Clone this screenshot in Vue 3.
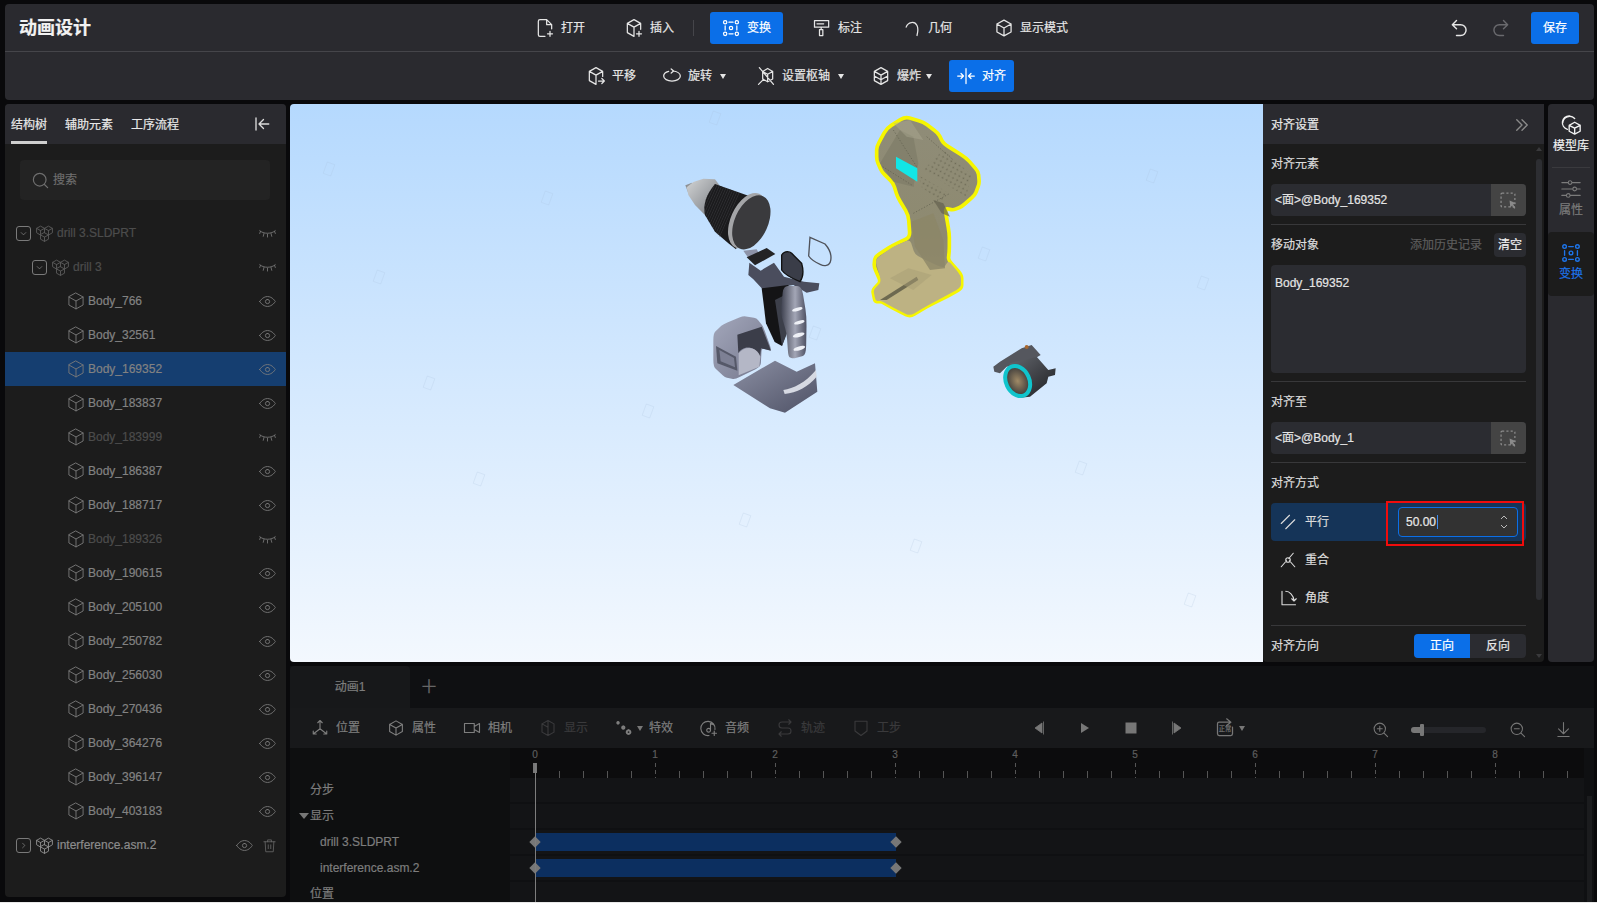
<script setup>
import { h } from 'vue'

const dots = (pts) => pts.map(([x, y]) => `M${x - 2} ${y}a2 2 0 1 0 4 0a2 2 0 1 0-4 0`).join(' ')
const icons = {
  open: 'M14 2H6a2 2 0 0 0-2 2v16a2 2 0 0 0 2 2h6 M14 2l6 6v5 M14 2v6h6 M18 16v6 M15 19h6',
  insert: 'M12 2 20 6.5v7 M12 2 4 6.5v11L12 22 M4 6.5l8 4.5 8-4.5 M12 11v11 M18 16v6 M15 19h6',
  transform: dots([[5, 5], [19, 5], [5, 19], [19, 19], [12, 12]]) + ' M9.5 5h5 M9.5 19h5 M5 9.5v5 M19 9.5v5',
  mark: 'M3 3h17v8H3z M6 7h8 M11 11v3H9v7h4v-7h-2',
  arc: 'M5 11C7 5 15 3 18 9c1.5 3 1 8 0 12',
  cube: 'M12 2.5 20.5 7.2v9.6L12 21.5l-8.5-4.7V7.2z M3.5 7.2 12 12l8.5-4.8 M12 12v9.5',
  undo: 'M9 3 4 8l5 5 M4 8h10a6.5 6.5 0 0 1 0 13H9',
  redo: 'M15 3l5 5-5 5 M20 8H10a6.5 6.5 0 0 0 0 13h5',
  move: 'M12 2 20 6.5v6 M12 2 4 6.5v11L12 22 M4 6.5l8 4.5 8-4.5 M12 11v11 M15 18h7 M19 15l3 3-3 3',
  rotate: 'M8 6.5C4 7.5 2 9.5 2 12c0 3.5 4.5 6 10 6s10-2.5 10-6c0-3-4-5.5-9-6 M11 3.5 14 6l-3 2.5',
  pivot: 'M14 3l6 3.5v9L14 19l-6-3.5v-9z M8 6.5l6 3.5 6-3.5 M14 10v9 M4 2l17 20 M3 22l6-6',
  explode: 'M12 2 20 6.5v11L12 22 4 17.5v-11z M4 6.5l8 4.5 8-4.5 M12 11v11 M4 12l8 4.5 8-4.5',
  align: 'M12 3v18 M2 12h6 M6 9l3 3-3 3 M22 12h-6 M18 9l-3 3 3 3',
  collapse: 'M4 4v16 M21 12H8 M14 6l-6 6 6 6',
  search: 'M11 3a8 8 0 1 0 0 16a8 8 0 1 0 0-16 M17 17l4 4',
  dbl: 'M5 5l7 7-7 7 M12 5l7 7-7 7',
  eye: 'M1 12s4-7 11-7 11 7 11 7-4 7-11 7-11-7-11-7z M12 9a3 3 0 1 0 0 6a3 3 0 1 0 0-6',
  shut: 'M1 8c5 5 17 5 22 0 M2 9l-1 3 M7 12l-1 4 M12 13v4 M17 12l1 4 M22 9l1 3',
  group: 'M12 11l5 2.8v5.4L12 22l-5-2.8v-5.4z M7 13.8l5 2.8 5-2.8 M12 16.6V22 M7 14 2 11V5.5L7 2.7l5 2.8 5-2.8 5 2.8V11l-5 3 M2 5.5l5 2.8 5-2.8 5 2.8 5-2.8 M12 5.5V11 M7 8.3V14 M17 8.3V14',
  down: 'M7 10l5 5 5-5',
  right: 'M10 7l5 5-5 5',
  trash: 'M3 6h18 M9 6V3h6v3 M5 6l1 16h12l1-16 M10 11v6 M14 11v6',
  model: 'M10 2a7.5 7.5 0 0 0-2 14.7 M16 9l6 3.3v6.5L16 22l-6-3.2v-6.5z M10 12.3l6 3.2 6-3.2 M16 15.5V22 M3 9.5A7.5 7.5 0 0 1 16 5',
  attrs: 'M2 5h7 M13 5h9 M2 12h12 M18 12h4 M2 19h5 M11 19h11 M11 3a2 2 0 1 0 0 4a2 2 0 1 0 0-4 M16 10a2 2 0 1 0 0 4a2 2 0 1 0 0-4 M9 17a2 2 0 1 0 0 4a2 2 0 1 0 0-4',
  parallel: 'M3 14 14 3 M9 21 21 9',
  coincide: 'M3 21l7-8 M21 21l-7-8 M19 3l-6 7 M12 9a3 3 0 1 0 0 6a3 3 0 1 0 0-6',
  angle: 'M4 3v18h18 M9 3c5 0 10 5 11 12 M17 13l3 3 3-3',
  axes: 'M12 2v11 M9 5l3-3 3 3 M12 13 3 20 M3 16v4h4 M12 13l9 7 M17 20h4v-4',
  cam: 'M2 6h13v12H2z M15 10l7-4v12l-7-4',
  halfcube: 'M12 2 20 6.5v11L12 22 4 17.5v-11z M12 2v20 M4 6.5l8 4.5',
  effect: 'M4 4a1 1 0 1 0 .1 0 M11 10a1.5 1.5 0 1 0 .1 0 M18 15a2.5 2.5 0 1 0 .1 0',
  audio: 'M20 14a9.5 9.5 0 1 0-8 8 M14 6v9 M14 6l4 1.5 M14 15a2.5 2.5 0 1 1-5 0a2.5 2.5 0 1 1 5 0 M19 16v6 M16 19h6',
  track: 'M20 4H8a4 4 0 0 0 0 8h8a4 4 0 0 1 0 8H4 M17 1l3 3-3 3 M7 17l-3 3 3 3',
  step: 'M4 3h16v13l-8 6-8-6z',
  zin: 'M11 3a8 8 0 1 0 0 16a8 8 0 1 0 0-16 M17 17l5 5 M7.5 11h7 M11 7.5v7',
  zout: 'M11 3a8 8 0 1 0 0 16a8 8 0 1 0 0-16 M17 17l5 5 M7.5 11h7',
  dl: 'M12 2v15 M5 11l7 7 7-7 M4 22h16',
  loop: 'M19 5H5a2 2 0 0 0-2 2v12a2 2 0 0 0 2 2h14a2 2 0 0 0 2-2v-8 M14 1l5 4-5 4'
}

const Ico = (p) =>
  h('svg', {
    viewBox: '0 0 24 24',
    fill: 'none',
    stroke: 'currentColor',
    'stroke-width': p.w || 1.5,
    'stroke-linecap': 'round',
    'stroke-linejoin': 'round',
    class: 'ico'
  }, [h('path', { d: icons[p.n] })])
Ico.props = ['n', 'w']

// closes a polygon with slightly rounded corners, so a model's outline stays organic
const rounded = (pts, r = 0.25) => {
  const n = pts.length
  const lerp = (a, b, t) => [a[0] + (b[0] - a[0]) * t, a[1] + (b[1] - a[1]) * t]
  let d = ''
  pts.forEach((p, i) => {
    const a = lerp(p, pts[(i - 1 + n) % n], r)
    const b = lerp(p, pts[(i + 1) % n], r)
    d += `${i ? 'L' : 'M'}${a.join(' ')}Q${p.join(' ')} ${b.join(' ')}`
  })
  return d + 'Z'
}
const housing = rounded([[735,50],[790,66],[835,100],[850,130],[920,175],[955,215],[958,250],[945,285],[905,320],[880,330],[855,325],[868,400],[868,450],[865,480],[905,525],[905,565],[860,590],[800,620],[750,650],[700,625],[665,605],[645,605],[638,570],[662,545],[642,500],[645,470],[700,435],[750,412],[745,345],[712,290],[700,250],[665,215],[650,180],[650,140],[680,85]])
const housingBase = rounded([[645,478],[700,440],[750,418],[765,465],[850,505],[866,482],[903,527],[903,563],[800,618],[750,648],[700,623],[665,603],[647,603],[640,570],[664,545]])
const gripPath = rounded([[370,558],[425,558],[440,650],[438,765],[400,776],[385,770],[380,700],[362,640]])
const coverPath = rounded([[160,700],[190,672],[250,648],[290,655],[310,680],[335,752],[305,745],[302,800],[225,838],[195,832],[160,800]], 0.2)

const bodies = [
  ['Body_766', 1], ['Body_32561', 1], ['Body_169352', 1], ['Body_183837', 1], ['Body_183999', 0],
  ['Body_186387', 1], ['Body_188717', 1], ['Body_189326', 0], ['Body_190615', 1], ['Body_205100', 1],
  ['Body_250782', 1], ['Body_256030', 1], ['Body_270436', 1], ['Body_364276', 1], ['Body_396147', 1], ['Body_403183', 1]
]
const ticks = Array.from({ length: 44 }, (_, i) => i)
const seconds = [0, 1, 2, 3, 4, 5, 6, 7, 8]
const marks = [[715,118],[329,169],[547,198],[379,277],[429,383],[648,411],[815,333],[984,254],[1152,176],[1203,283],[1081,468],[916,546],[479,479],[745,520],[1190,600]]
const tools = [
  { n: 'axes', t: '位置', c: 'mp' }, { n: 'cube', t: '属性', c: 'mq' }, { n: 'cam', t: '相机', c: 'mq' },
  { n: 'halfcube', t: '显示', c: 'mq off' }, { n: 'effect', t: '特效', c: 'mq', caret: true, w: 2.6 },
  { n: 'audio', t: '音频', c: 'mq' }, { n: 'track', t: '轨迹', c: 'mq off' }, { n: 'step', t: '工步', c: 'mq off' }
]
</script>

<template>
  <div class="app">
    <header class="top">
      <div class="bar1">
        <div class="title">动画设计</div>
        <div class="bar1-tools">
          <button class="tb"><Ico n="open" />打开</button>
          <button class="tb"><Ico n="insert" />插入</button>
          <i class="vsep"></i>
          <button class="tb on"><Ico n="transform" />变换</button>
          <button class="tb n2"><Ico n="mark" />标注</button>
          <button class="tb n1"><Ico n="arc" />几何</button>
          <button class="tb n3"><Ico n="cube" />显示模式</button>
        </div>
        <div class="bar1-right">
          <span class="act"><Ico n="undo" w="1.7" /></span>
          <span class="act dim"><Ico n="redo" w="1.7" /></span>
          <button class="save">保存</button>
        </div>
      </div>
      <div class="bar2">
        <button class="tb2"><Ico n="move" />平移</button>
        <button class="tb2 g12"><Ico n="rotate" />旋转<i class="caret"></i></button>
        <button class="tb2 g16"><Ico n="pivot" />设置枢轴<i class="caret"></i></button>
        <button class="tb2 g13"><Ico n="explode" />爆炸<i class="caret c5"></i></button>
        <button class="tb2 g9 on"><Ico n="align" />对齐</button>
      </div>
    </header>

    <div class="main">
      <aside class="left">
        <div class="tabs">
          <span class="tab cur">结构树</span>
          <span class="tab">辅助元素</span>
          <span class="tab">工序流程</span>
          <span class="collapse"><Ico n="collapse" w="1.8" /></span>
        </div>
        <div class="search"><Ico n="search" w="1.5" /><span>搜索</span></div>
        <div class="tree">
          <div class="row lv0 hid">
            <span class="chk"><Ico n="down" /></span><span class="grp"><Ico n="group" w="1.2" /></span>
            <span class="name">drill 3.SLDPRT</span><span class="vis"><Ico n="shut" w="1.2" /></span>
          </div>
          <div class="row lv1 hid">
            <span class="chk"><Ico n="down" /></span><span class="grp"><Ico n="group" w="1.2" /></span>
            <span class="name">drill 3</span><span class="vis"><Ico n="shut" w="1.2" /></span>
          </div>
          <div v-for="b in bodies" :key="b[0]" class="row leaf" :class="{ sel: b[0] === 'Body_169352', hid: !b[1] }">
            <span class="cb"><Ico n="cube" w="1.1" /></span>
            <span class="name nm4">{{ b[0] }}</span>
            <span class="vis"><Ico :n="b[1] ? 'eye' : 'shut'" w="1.2" /></span>
          </div>
          <div class="row lv0 last">
            <span class="chk"><Ico n="right" /></span><span class="grp"><Ico n="group" w="1.2" /></span>
            <span class="name">interference.asm.2</span>
            <span class="vis"><Ico n="eye" w="1.2" /></span><span class="vis trash"><Ico n="trash" w="1.2" /></span>
          </div>
        </div>
      </aside>

      <div class="center">
        <div class="work">
          <div class="view">
            <svg class="scene" viewBox="0 0 973 558">
              <defs>
                <linearGradient id="silver" x1="0" y1="0" x2="1" y2="1"><stop offset="0" stop-color="#d2d4d5" /><stop offset=".6" stop-color="#9a9da1" /><stop offset="1" stop-color="#6c6f73" /></linearGradient>
                <linearGradient id="grip" x1="0" y1="0" x2="1" y2="0"><stop offset="0" stop-color="#3f4250" /><stop offset=".55" stop-color="#a3a6b6" /><stop offset="1" stop-color="#4d5062" /></linearGradient>
                <linearGradient id="cover" x1="0" y1="0" x2="1" y2="1"><stop offset="0" stop-color="#a3a7bb" /><stop offset="1" stop-color="#73768b" /></linearGradient>
                <linearGradient id="base" x1="0" y1="0" x2="1" y2="1"><stop offset="0" stop-color="#8b8fa3" /><stop offset="1" stop-color="#4f5266" /></linearGradient>
                <linearGradient id="yel" x1="0" y1="0" x2="0" y2="1"><stop offset="0" stop-color="#8f8c78" /><stop offset=".6" stop-color="#8e8a70" /><stop offset="1" stop-color="#a49c78" /></linearGradient>
                <linearGradient id="dark" x1="0" y1="0" x2="1" y2="1"><stop offset="0" stop-color="#65686f" /><stop offset="1" stop-color="#1d1e21" /></linearGradient>
                <radialGradient id="hole"><stop offset="0" stop-color="#a08a66" /><stop offset="1" stop-color="#3b3a3a" /></radialGradient>
                <pattern id="grid" width="14" height="14" patternUnits="userSpaceOnUse" patternTransform="rotate(28)"><circle cx="4" cy="4" r="2.6" fill="#6f6c58" /></pattern>
                <pattern id="ridge" width="7" height="7" patternUnits="userSpaceOnUse" patternTransform="rotate(24)"><rect width="2" height="7" fill="#303033" /></pattern>
              </defs>
              <g v-for="m in marks" :key="m[0]" :transform="`translate(${m[0] - 290} ${m[1] - 104}) rotate(20)`">
                <rect x="-4" y="-6" width="8" height="12" fill="none" stroke="#a9bfd8" stroke-opacity=".28" stroke-width=".7" />
              </g>
              <g transform="translate(370 -4) scale(.33333)">
                <!-- chuck -->
                <path d="M76 256 96 248 104 272 86 282Z" fill="#8f9296" />
                <path d="M80 262 100 246 130 236 165 238 178 255Q138 295 140 350L105 315 85 285Z" fill="url(#silver)" />
                <path d="M165 252 295 298 228 448 205 430 165 395 135 345Q125 300 165 252Z" fill="#1b1b1d" />
                <path d="M165 252 240 280 180 410 165 395 135 345Q125 300 165 252Z" fill="url(#ridge)" />
                <ellipse cx="262" cy="362" rx="50" ry="88" transform="rotate(24 262 362)" fill="#a4a5a8" />
                <ellipse cx="274" cy="367" rx="50" ry="86" transform="rotate(24 274 367)" fill="#3a3a3d" />
                <!-- trigger frame -->
                <path d="M250 452 290 448 302 470 265 474Z" fill="#8d93a8" />
                <path d="M260 472 320 444 346 462 285 496Z" fill="#232325" />
                <path d="M268 488 302 512 342 488 372 530 432 545 478 550 475 570 440 578 400 555 310 570 280 538 265 525Z" fill="#4a4d5d" />
                <path d="M305 565 385 555 400 640 366 738 344 726 318 670Z" fill="#141416" />
                <path d="M345 600 385 580 385 690 366 738Z" fill="#3c3f4a" />
                <path :d="gripPath" fill="url(#grip)" />
                <g fill="#eef0f6">
                  <ellipse cx="412" cy="628" rx="16" ry="5" transform="rotate(-15 412 628)" />
                  <ellipse cx="418" cy="667" rx="16" ry="5" transform="rotate(-15 418 667)" />
                  <ellipse cx="416" cy="705" rx="18" ry="6" transform="rotate(-15 416 705)" />
                  <ellipse cx="418" cy="745" rx="18" ry="6" transform="rotate(-15 418 745)" />
                </g>
                <path d="M365 465c10-15 25-10 30-5l30 30c8 28 2 45-5 55-25-10-45-20-55-35Z" fill="#3a3d48" stroke="#111" stroke-width="4" />
                <path d="M450 412 495 432c18 20 20 35 17 50-3 18-22 16-30 12-18-8-28-14-36-26Z" fill="none" stroke="#4f525a" stroke-width="4" />
                <!-- battery cover -->
                <path :d="coverPath" fill="url(#cover)" />
                <path d="M232 704 305 680 333 752 303 745 300 770C280 730 245 740 235 760Z" fill="#3b3d49" />
                <path d="M168 738 228 770 232 812 172 790Z" fill="#555868" />
                <path d="M178 750 222 774 225 802 182 784Z" fill="#7d8094" />
                <path d="M236 760c20-25 55-20 65 10l-3 30-62 26Z" fill="#b4b7c6" />
                <!-- base -->
                <path d="M220 855 345 782 410 815 465 790 472 875 375 938 330 925Z" fill="url(#base)" />
                <path d="M370 870c30-5 65-20 98-60l2 20c-25 30-60 48-96 52Z" fill="#d6d9e2" />
                <!-- housing -->
                <path :d="housing" fill="url(#yel)" stroke="#f6f600" stroke-width="11" stroke-linejoin="round" />
                <path :d="housingBase" fill="#bdb283" />
                <path d="M790 210 918 290 935 225 850 150Z" fill="url(#grid)" />
                <path d="M775 225 860 275 845 305 785 262Z" fill="url(#grid)" />
                <path d="M660 190 700 245 760 260 775 190 760 110 720 90Z" fill="#7a7865" fill-opacity=".55" />
                <path d="M700 70 750 60 790 120 740 110Z" fill="#b0ad97" fill-opacity=".4" />
                <path d="M755 365 820 340 850 420 855 505 810 510 765 440Z" fill="#8c8668" fill-opacity=".8" />
                <path d="M820 300 850 310 870 350 845 340Z" fill="#64614f" fill-opacity=".7" />
                <path d="M660 600 770 530 775 540 680 600Z" fill="#6d6950" />
                <path d="M690 535 745 505 815 525 760 570Z" fill="#a79e76" fill-opacity=".5" />
                <path d="M668 200 760 258M700 90 770 200M800 110 880 180M760 340 870 280" stroke="#5e5c4b" stroke-width="2" fill="none" stroke-dasharray="4 5" />
                <path d="M708 170 772 205 772 245 708 205Z" fill="#12e6e6" />
                <!-- small part -->
                <path d="M1000 800 1020 785 1085 745 1115 735 1142 765 1100 790 1040 800 1020 820 1003 815Z" fill="#55575e" />
                <path d="M1050 790 1130 770 1165 810 1187 805 1185 825 1165 830 1160 850 1110 890 1080 893 1040 860Z" fill="url(#dark)" />
                <circle cx="1100" cy="741" r="6" fill="#a8672f" />
                <ellipse cx="1073" cy="843" rx="35" ry="47" transform="rotate(-25 1073 843)" fill="url(#hole)" stroke="#10c4cc" stroke-width="12" />
              </g>
            </svg>
          </div>

          <section class="panel">
            <div class="panel-head"><span>对齐设置</span><span class="dbl"><Ico n="dbl" w="1.8" /></span></div>
            <div class="panel-body">
              <div class="sec-title gap10">对齐元素</div>
              <div class="field"><span class="field-text">&lt;面&gt;@Body_169352</span>
                <span class="pick"><svg viewBox="0 0 16 16"><rect x="1" y="1" width="13" height="13" rx="1" fill="none" stroke="#8a8a8a" stroke-width="1.2" stroke-dasharray="2 2" /><path d="M9 8l6 2.5-2.6 1L14.5 15l-1.2.8-2-3-1.6 2z" fill="#8a8a8a" /></svg></span>
              </div>
              <hr class="line" />
              <div class="sec-title mv"><span>移动对象</span><span class="hist">添加历史记录</span><span class="clear">清空</span></div>
              <div class="area">Body_169352</div>
              <hr class="line" />
              <div class="sec-title gap10">对齐至</div>
              <div class="field"><span class="field-text">&lt;面&gt;@Body_1</span>
                <span class="pick"><svg viewBox="0 0 16 16"><rect x="1" y="1" width="13" height="13" rx="1" fill="none" stroke="#8a8a8a" stroke-width="1.2" stroke-dasharray="2 2" /><path d="M9 8l6 2.5-2.6 1L14.5 15l-1.2.8-2-3-1.6 2z" fill="#8a8a8a" /></svg></span>
              </div>
              <hr class="line" />
              <div class="sec-title gap10">对齐方式</div>
              <div class="mode cur"><Ico n="parallel" /><span>平行</span>
                <div class="num"><span>50.00</span><i class="cursor"></i>
                  <span class="spin"><svg viewBox="0 0 10 16"><path d="M2 5l3-3 3 3M2 11l3 3 3-3" fill="none" stroke="#bbb" stroke-width="1" /></svg></span>
                </div>
                <i class="red"></i>
              </div>
              <div class="mode"><Ico n="coincide" /><span>重合</span></div>
              <div class="mode"><Ico n="angle" /><span>角度</span></div>
              <hr class="line" />
              <div class="sec-title dir"><span>对齐方向</span>
                <div class="seg"><span class="seg-on">正向</span><span>反向</span></div>
              </div>
            </div>
            <i class="sb-up"></i><i class="sb"></i><i class="sb-down"></i>
          </section>

          <nav class="rail">
            <div class="rail-item bright"><Ico n="model" /><span>模型库</span></div>
            <i class="rail-sep"></i>
            <div class="rail-item"><Ico n="attrs" w="1.2" /><span>属性</span></div>
            <div class="rail-item active"><Ico n="transform" /><span>变换</span></div>
          </nav>
        </div>

        <div class="timeline">
          <div class="tl-tabs"><span class="tl-tab">动画1</span><span class="tl-add">＋</span></div>
          <div class="tl-tools">
            <span v-for="t in tools" :key="t.t" class="tool" :class="t.c">
              <Ico :n="t.n" :w="t.w" /><i v-if="t.caret" class="caret small"></i>{{ t.t }}
            </span>
            <span class="tl-play">
              <svg viewBox="0 0 16 16"><path d="M11 3v10L4 8z M12.5 1.5v13" fill="#777" stroke="#777" stroke-width=".8" /></svg>
              <svg viewBox="0 0 16 16"><path d="M4 3v10l8-5z" fill="#777" /></svg>
              <svg viewBox="0 0 16 16"><path d="M2.5 2.5h11v11h-11z" fill="#777" /></svg>
              <svg viewBox="0 0 16 16"><path d="M5 3v10l7-5z M3.5 1.5v13" fill="#777" stroke="#777" stroke-width=".8" /></svg>
              <span class="loop"><Ico n="loop" /><em>正常</em></span><i class="caret small"></i>
            </span>
            <span class="tl-right">
              <span class="tlr zi"><Ico n="zin" /></span>
              <span class="slider"><i class="fill"></i><i class="thumb"></i></span>
              <span class="tlr zo"><Ico n="zout" /></span>
              <span class="tlr dl"><Ico n="dl" /></span>
            </span>
          </div>
          <div class="tl-body">
            <div class="tl-labels">
              <div class="tl-sp"></div>
              <div class="lb">分步</div>
              <div class="lb"><i class="open"></i>显示</div>
              <div class="lb sub">drill 3.SLDPRT</div>
              <div class="lb sub">interference.asm.2</div>
              <div class="lb">位置</div>
            </div>
            <div class="tl-grid">
              <div class="ruler">
                <span v-for="s in seconds" :key="'s' + s" class="sec" :style="{ left: 25 + s * 120 + 'px' }">{{ s }}</span>
                <i v-for="t in ticks" :key="'t' + t" class="tk" :class="{ big: t % 5 === 0 }" :style="{ left: 25 + t * 24 + 'px' }"></i>
              </div>
              <div class="track"></div>
              <div class="track"></div>
              <div class="track"><i class="span"></i><i class="dia a"></i><i class="dia b"></i></div>
              <div class="track"><i class="span"></i><i class="dia a"></i><i class="dia b"></i></div>
              <div class="track"></div>
              <i class="head"></i><i class="headline"></i>
            </div>
            <i class="tl-sb"></i>
          </div>
        </div>
      </div>
    </div>
  </div>
</template>

<style>
html, body { margin: 0; background: #e9e9e9; overflow: hidden; }
</style>

<style scoped>
* { box-sizing: border-box; }
.app {
  width: 1597px; height: 902px; overflow: hidden; background: #09090b; padding: 4px 3px 0 5px;
  display: flex; flex-direction: column; gap: 4px;
  font: 12px/16px "Liberation Sans", "Noto Sans CJK SC", sans-serif; color: #e6e6e6;
  -webkit-text-stroke: .2px currentColor;
}
.ico { width: 16px; height: 16px; display: block; flex: none; }
button { font: inherit; color: inherit; background: none; border: 0; cursor: pointer; }
i, em { font-style: normal; }

.top { height: 96px; background: #2a2a2f; border-radius: 4px; flex: none; }
.bar1 { height: 48px; padding-top: 1px; border-bottom: 1px solid #45454a; display: flex; align-items: center; position: relative; }
.title { width: 519px; flex: none; padding-left: 14px; font-size: 18px; font-weight: 700; color: #f2f2f2; }
.bar1-tools { display: flex; align-items: center; gap: 16px; }
.tb { height: 32px; padding: 0 12px 0 13px; display: flex; align-items: center; gap: 8px; border-radius: 3px; }
.tb .ico, .tb2 .ico { width: 20px; height: 20px; margin: 0 -2px; }
.on { background: #0b6fe8; color: #fff; }
.vsep { width: 1px; height: 16px; background: #45454a; margin: 0 0 0 -9px; }
.n1 { margin-left: 1px; } .n2 { margin-left: 2px; } .n3 { margin-left: 3px; }
.bar1-right { margin-left: auto; display: flex; align-items: center; padding-right: 15px; }
.act { width: 42px; display: flex; justify-content: center; color: #e6e6e6; }
.act .ico { width: 20px; height: 20px; }
.dim { color: #6a6a6e; }
.save { width: 48px; height: 32px; background: #0b6fe8; color: #fff; border-radius: 3px; margin-left: 9px; }
.bar2 { height: 48px; display: flex; align-items: center; padding-left: 575px; }
.tb2 { height: 32px; padding: 0 8px; display: flex; align-items: center; gap: 8px; border-radius: 3px; }
.tb2.on { padding-left: 9px; }
.g12 { margin-left: 12px; } .g16 { margin-left: 16px; } .g13 { margin-left: 13px; } .g9 { margin-left: 9px; }
.caret { width: 0; height: 0; border: 3.5px solid transparent; border-top: 5px solid #e6e6e6; border-bottom: 0; }
.c5 { margin-left: -3px; }
.caret.small { border-top-color: #777; }

.main { flex: 1; display: flex; gap: 4px; min-height: 0; }
.left { width: 281px; flex: none; height: 793px; background: #1c1c1c; border-radius: 4px; overflow: hidden; }
.tabs { height: 40px; background: #2a2a2f; display: flex; gap: 18px; padding-left: 6px; align-items: stretch; }
.tab { display: flex; align-items: center; color: #e8e8e8; height: 40px; padding-top: 2px; }
.tab.cur { border-bottom: 3px solid #cfcfcf; padding-top: 5px; }
.collapse { margin-left: auto; align-self: center; padding-right: 15px; color: #dcdcdc; }
.collapse .ico { width: 18px; height: 18px; }
.search { margin: 16px 16px 0 15px; height: 40px; background: #232323; border-radius: 4px; display: flex; align-items: center; gap: 3px; padding-left: 11px; color: #6e6e6e; }
.search .ico { width: 19px; height: 19px; }
.tree { margin-top: 16px; }
.row { height: 34px; display: flex; align-items: center; padding-right: 11px; color: #828282; }
.lv0 { padding-left: 11px; }
.lv1 { padding-left: 27px; }
.leaf { padding-left: 63px; }
.sel { background: #153e70; }
.hid { color: #4c4c4c; }
.last { color: #8c8c8c; }
.chk { width: 15px; height: 15px; border: 1px solid #7a7a7a; border-radius: 3px; display: flex; align-items: center; justify-content: center; color: #8a8a8a; }
.chk .ico { width: 11px; height: 11px; }
.grp { margin-left: 5px; color: #585858; }
.grp .ico { width: 19px; height: 19px; margin: 0 -1.5px; }
.last .grp { color: #8c8c8c; }
.name { margin-left: 5px; }
.nm4 { margin-left: 4px; }
.cb { color: #7a7a7a; }
.cb .ico { width: 20px; height: 20px; margin: 0 -2px; }
.vis { margin-left: auto; color: #7d7d7d; }
.vis .ico { width: 17px; height: 17px; margin-right: -.5px; }
.hid .vis { color: #7a7a7a; }
.vis.trash { margin-left: 9px; margin-right: -1px; color: #6f6f6f; }
.vis.trash .ico { width: 15px; height: 15px; }

.center { flex: 1; min-width: 0; display: flex; flex-direction: column; gap: 4px; }
.work { height: 558px; flex: none; display: flex; }
.view { width: 973px; flex: none; position: relative; background: linear-gradient(#b5d9fe, #f3f8fe); border-radius: 4px 0 0 4px; overflow: hidden; }
.scene { position: absolute; inset: 0; width: 973px; height: 558px; display: block; }
.panel { width: 281px; flex: none; background: #1c1c1c; border-radius: 0 0 4px 4px; position: relative; overflow: hidden; }
.panel-head { height: 40px; background: #2a2a2f; display: flex; align-items: center; justify-content: space-between; padding: 2px 13px 0 8px; color: #e8e8e8; }
.dbl { color: #8a8a8a; }
.dbl .ico { width: 18px; height: 18px; }
.panel-body { padding: 0 18px 0 8px; }
.sec-title { display: flex; align-items: center; height: 20px; color: #dcdcdc; }
.gap10 { margin: 10px 0; }
.field { height: 32px; background: #2b2c31; border-radius: 4px; display: flex; align-items: center; overflow: hidden; }
.field-text { flex: 1; padding-left: 4px; color: #e4e4e4; }
.pick { width: 35px; height: 32px; background: #444; display: flex; align-items: center; justify-content: center; }
.pick svg { width: 17px; height: 17px; }
.line { border: 0; border-top: 1px solid #38383a; margin: 8px 0 0; }
.mv { height: 24px; margin: 8px 0; }
.hist { margin-left: auto; color: #5c5c5c; }
.clear { width: 32px; height: 24px; background: #2b2c31; border-radius: 4px; margin-left: 12px; display: flex; align-items: center; justify-content: center; color: #f0f0f0; }
.area { height: 108px; background: #2b2c31; border-radius: 4px; padding: 10px 4px; color: #e4e4e4; }
.mode { height: 38px; display: flex; align-items: center; gap: 8px; padding-left: 8px; border-radius: 4px; position: relative; color: #dcdcdc; }
.mode > .ico { width: 18px; height: 18px; }
.mode.cur { background: #153458; }
.num { position: absolute; left: 127px; top: 4px; width: 120px; height: 30px; background: #323232; border: 1px solid #0b6fe8; border-radius: 4px; display: flex; align-items: center; padding-left: 7px; color: #e8e8e8; }
.cursor { width: 1px; height: 14px; background: #3b8cf0; margin-left: 1px; }
.spin { position: absolute; right: 8px; top: 6px; width: 10px; height: 16px; }
.spin svg { display: block; width: 10px; height: 16px; }
.red { position: absolute; left: 115px; top: -2px; width: 138px; height: 45px; border: 2px solid #f00c0c; pointer-events: none; }
.dir { height: 24px; margin-top: 8px; }
.seg { margin-left: auto; display: flex; width: 112px; height: 24px; background: #2b2c31; border-radius: 4px; overflow: hidden; }
.seg span { flex: 1; display: flex; align-items: center; justify-content: center; color: #e8e8e8; }
.seg .seg-on { background: #0b6fe8; color: #fff; }
.sb { position: absolute; left: 273px; top: 55px; width: 6px; height: 441px; background: #2d2e32; border-radius: 3px; }
.sb-up, .sb-down { position: absolute; left: 273px; width: 0; height: 0; border: 3px solid transparent; }
.sb-up { top: 43px; border-bottom: 4px solid #3a3a3c; border-top: 0; }
.sb-down { top: 550px; border-top: 4px solid #3a3a3c; border-bottom: 0; }
.rail { width: 46px; margin-left: 4px; flex: none; background: #2a2a2f; border-radius: 4px; overflow: hidden; }
.rail-item { display: flex; flex-direction: column; align-items: center; height: 64px; padding-top: 10px; color: #7b7b7b; gap: 2px; }
.rail-item .ico { width: 22px; height: 22px; flex: none; }
.rail-item.bright { color: #f0f0f0; height: 63px; white-space: nowrap; }
.rail-sep { display: block; height: 1px; background: #3a3a3e; margin: 0 4px; }
.rail-item.active { background: #1c1c1c; color: #1d74ea; border-radius: 4px; }

.timeline { flex: 1; min-height: 0; background: #0f1012; overflow: hidden; }
.tl-tabs { height: 42px; display: flex; align-items: center; }
.tl-tab { width: 120px; height: 42px; background: #17181a; display: flex; align-items: center; justify-content: center; color: #7d7d7d; border-radius: 4px 4px 0 0; }
.tl-add { margin-left: 10px; font-size: 18px; color: #666; }
.tl-tools { height: 40px; background: #18191b; display: flex; align-items: center; padding-left: 21px; color: #7e7e7e; position: relative; }
.tool { display: flex; align-items: center; gap: 7px; }
.tool > .ico { width: 18px; height: 18px; }
.mq { margin-left: 27px; }
.mp { margin-left: 0; }
.off { color: #3a3a3c; }
.tool .caret.small { margin: 0 -1px 0 -3px; }
.tl-play { position: absolute; left: 741px; top: 10px; display: flex; align-items: center; gap: 30px; }
.tl-play svg { width: 16px; height: 16px; display: block; }
.loop { position: relative; color: #777; display: block; }
.loop .ico { width: 20px; height: 20px; }
.loop em { position: absolute; left: 3px; top: 6px; font-size: 7px; line-height: 10px; transform: scale(.9); white-space: nowrap; }
.tl-play .caret { margin-left: -26px; }
.tl-right { position: absolute; left: 1082px; top: 13px; display: flex; align-items: center; color: #777; }
.tlr .ico { width: 17px; height: 17px; }
.slider { width: 75px; height: 6px; margin-left: 22px; background: #25262a; border-radius: 3px; position: relative; }
.fill { position: absolute; left: 0; top: 0; width: 12px; height: 6px; background: #777; border-radius: 3px 0 0 3px; }
.thumb { position: absolute; left: 9px; top: -3px; width: 4px; height: 12px; background: #777; border-radius: 1px; }
.zo { margin-left: 23px; }
.dl { margin-left: 29px; }

.tl-body { display: flex; height: 154px; position: relative; }
.tl-labels { width: 220px; background: #0e0f10; flex: none; color: #7d7d7d; }
.tl-sp { height: 30px; }
.lb { height: 26px; padding: 0 0 2px 20px; display: flex; align-items: center; position: relative; }
.lb.sub { padding-left: 30px; }
.open { position: absolute; left: 9px; top: 9px; width: 0; height: 0; border: 5px solid transparent; border-top: 6px solid #777; border-bottom: 0; }
.tl-grid { width: 1074px; flex: none; position: relative; }
.ruler { height: 30px; background: #0c0c0d; position: relative; }
.sec { position: absolute; top: 0; width: 12px; margin-left: -6px; text-align: center; color: #5e5e5e; font-size: 10px; line-height: 14px; }
.tk { position: absolute; bottom: 0; width: 1px; height: 7px; background: #555; }
.tk.big { height: 15px; background: repeating-linear-gradient(#555 0 4px, transparent 4px 7px); }
.track { height: 24px; background: #131416; margin-bottom: 2px; position: relative; }
.span { position: absolute; left: 25px; top: 3px; width: 361px; height: 18px; background: #0c2f60; }
.dia { position: absolute; top: 8px; width: 8px; height: 8px; background: #777; transform: rotate(45deg); }
.dia.a { left: 21px; }
.dia.b { left: 382px; }
.head { position: absolute; left: 23px; top: 15px; width: 4px; height: 10px; background: #777; }
.headline { position: absolute; left: 25px; top: 15px; bottom: 0; width: 1px; background: #7d7d7d; }
.tl-sb { position: absolute; left: 1297px; top: 48px; width: 5px; height: 106px; background: #1b1c1e; }
</style>
